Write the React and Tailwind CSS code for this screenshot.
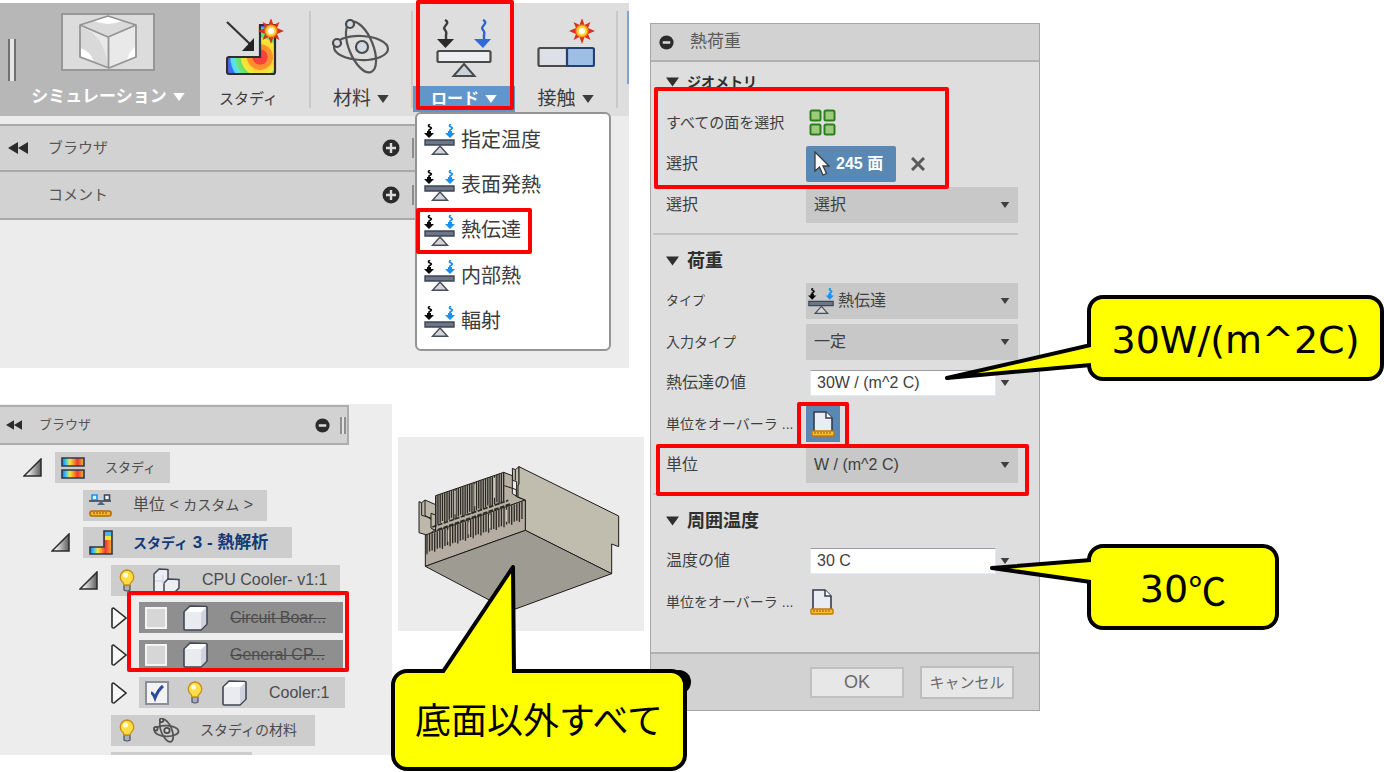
import clsx from "clsx";

const TriangleDown = ({ className }) => (
  <svg viewBox="0 0 10 7" className={className} aria-hidden="true">
    <path d="M0 0h10L5 7z" fill="currentColor" />
  </svg>
);

const Rewind = ({ className }) => (
  <svg viewBox="0 0 20 12" className={className} aria-hidden="true">
    <path d="M10 0v12L0 6zM20 0v12l-10-6z" fill="#2b2b2b" />
  </svg>
);

const RoundSign = ({ plus, className }) => (
  <svg viewBox="0 0 18 18" className={className} aria-hidden="true">
    <circle cx="9" cy="9" r="8.5" fill="#2b2b2b" />
    <path
      d={plus ? "M4 9h10M9 4v10" : "M4.5 9h9"}
      stroke="#dcdcdc"
      strokeWidth={plus ? 2.4 : 3}
    />
  </svg>
);

const Spark = ({ x, y }) => (
  <g transform={`translate(${x} ${y})`}>
    <path
      d="M0-13 2.5-6 8.5-9 6-3 13 0 6 3 8.5 9 2.5 6 0 13-2.5 6-8.5 9-6 3-13 0-6-3-8.5-9-2.5-6z"
      fill="#d8321a"
    />
    <circle r="6.5" fill="#f7941d" />
    <circle r="5" fill="#ffd83a" />
    <circle r="3" fill="#fff" />
  </g>
);

const CubeBig = () => (
  <svg viewBox="0 0 58 54" className="h-[54px] w-[58px]" aria-hidden="true">
    <path d="M1 10 29 1l28 9v32L30 53 1 42z" fill="#e9e9e9" />
    <path d="M1 10 29 1l28 9-28 12z" fill="#dadada" />
    <path d="M15 6 29 1l14 5q-14 6-28 0z" fill="#fff" />
    <path d="M1 12q24 6 28 40L1 42z" fill="#d9d9d9" />
    <path d="M1 33q10 3 14 13L1 41zM57 31q-8 6-9 15l9-4z" fill="#fff" />
    <path
      d="M1 10 29 1l28 9v32L30 53 1 42zM1 10l28 12 28-12M29.500 22v30"
      fill="none"
      stroke="#949494"
      strokeWidth="1.800"
      strokeLinejoin="round"
    />
  </svg>
);

const StudyIcon = () => (
  <svg viewBox="0 0 58 58" className="h-[58px] w-[58px]" aria-hidden="true">
    <defs>
      <radialGradient id="heat" gradientUnits="userSpaceOnUse" cx="34" cy="38" r="33">
        <stop offset="0.220" stopColor="#f8423c" />
        <stop offset="0.240" stopColor="#f98a2e" />
        <stop offset="0.380" stopColor="#f9962c" />
        <stop offset="0.400" stopColor="#fdd835" />
        <stop offset="0.560" stopColor="#f4ea3c" />
        <stop offset="0.600" stopColor="#6de05c" />
        <stop offset="0.740" stopColor="#6fe580" />
        <stop offset="0.780" stopColor="#5be4ee" />
        <stop offset="0.880" stopColor="#57d6f5" />
        <stop offset="0.920" stopColor="#3f6df0" />
      </radialGradient>
    </defs>
    <path
      d="M2 38h32V6h15v47q0 2-2 2H3q-2 0-2-2V40q0-2 2-2z"
      fill="url(#heat)"
      stroke="#2e2e2e"
      strokeWidth="2.200"
    />
    <path d="m1 3 23 22" stroke="#333" strokeWidth="2.200" />
    <path d="M28 19v13H16z" fill="#222" />
    <Spark x={45} y={12} />
  </svg>
);

const AtomIcon = ({ className, strokeWidth = 2.2 }) => (
  <svg viewBox="0 0 58 56" className={className} strokeWidth={strokeWidth} aria-hidden="true">
    <g fill="none" stroke="#555">
      <ellipse cx="29" cy="29" rx="27" ry="12" transform="rotate(2 29 29)" />
      <ellipse cx="29" cy="28" rx="12" ry="27" transform="rotate(-22 29 28)" />
    </g>
    <g fill="#d3dae4" stroke="#4b4b4b">
      <circle cx="30" cy="28" r="6" />
      <circle cx="18" cy="5" r="4" />
      <circle cx="5" cy="24" r="4" />
    </g>
  </svg>
);

const LoadIcon = () => (
  <svg viewBox="0 0 56 58" className="h-[58px] w-[56px]" aria-hidden="true">
    <g fill="none" strokeWidth="2.400">
      <path d="M9 1q4 2 1 5t-1 5 1 5v6" stroke="#3a3a3a" />
      <path d="M47 1q4 2 1 5t-1 5 1 5v6" stroke="#2f63c8" />
    </g>
    <path d="M1 20h17l-8.500 9z" fill="#2a2a2a" />
    <path d="M38 20h17l-8 9z" fill="#2f6ad8" />
    <rect x="1.500" y="32" width="53" height="11" rx="1.500" fill="#eceef2" stroke="#4a4a4a" strokeWidth="2.200" />
    <path d="m28 45 10.500 12h-21z" fill="#ccd2dc" stroke="#4a4a4a" strokeWidth="2" />
  </svg>
);

const ContactIcon = () => (
  <svg viewBox="0 0 58 50" className="h-[50px] w-[58px]" aria-hidden="true">
    <rect x="1.500" y="29" width="30" height="18" rx="1.500" fill="#dde0e6" stroke="#4a4a4a" strokeWidth="2.200" />
    <rect x="30" y="29" width="27" height="18" rx="1.500" fill="#9dbfe6" stroke="#253f74" strokeWidth="2.200" />
    <Spark x={45} y={12} />
  </svg>
);

const BalanceIcon = ({ className }) => (
  <svg viewBox="0 0 31 31" className={className} aria-hidden="true">
    <g fill="none" strokeWidth="1.800">
      <path d="M6 0q-3 2 0 3t-1 3v3" stroke="#111" />
      <path d="M27 0q-3 2 0 3t-1 3v3" stroke="#1791f5" />
    </g>
    <path d="M0 9h3V7h4v2h3l-5 5z" fill="#080808" />
    <path d="M21 9h3V7h4v2h3l-5 5z" fill="#1791f5" />
    <path d="M1 16h29v5H1z" fill="#6d7686" stroke="#3d4454" strokeWidth="1.400" />
    <path d="m16 22 7.500 8.300H8.500z" fill="#d4d6da" stroke="#454b59" strokeWidth="1.400" />
  </svg>
);

const HeatDefs = () => (
  <linearGradient id="rainbow">
    <stop offset="0" stopColor="#2c6cf0" />
    <stop offset="0.180" stopColor="#35cdf0" />
    <stop offset="0.350" stopColor="#f6e83a" />
    <stop offset="0.550" stopColor="#f98b2b" />
    <stop offset="0.700" stopColor="#f4392e" />
    <stop offset="1" stopColor="#f9b330" />
  </linearGradient>
);

const BarsIcon = () => (
  <svg viewBox="0 0 24 24" className="size-6" aria-hidden="true">
    <HeatDefs />
    <g fill="url(#rainbow)" stroke="#2f3747" strokeWidth="1.600">
      <path d="M1 2h22v8H1zM1 14h22v8H1z" />
    </g>
  </svg>
);

const UnitsIcon = () => (
  <svg viewBox="0 0 24 24" className="size-6" aria-hidden="true">
    <path d="M3 2h5v5H3z" fill="#e3f1fc" stroke="#1791f5" strokeWidth="1.600" />
    <path d="M15.500 2h5v5h-5z" fill="#f2f2f2" stroke="#3d4656" strokeWidth="1.600" />
    <path d="M0 8h22" stroke="#3d4656" strokeWidth="1.600" />
    <path d="m12 8 4 4H8z" fill="#59616f" />
    <rect x="1" y="18" width="21" height="5" rx="2" fill="#f6b52c" stroke="#b66a08" strokeWidth="1.600" />
    <path d="M5 19v2M8 19v2M11 19v2M14 19v2M17 19v2" stroke="#8a5207" />
  </svg>
);

const StudySmallIcon = () => (
  <svg viewBox="0 0 24 25" className="h-[25px] w-6" aria-hidden="true">
    <path d="M1 17h14V1h8v23H1z" fill="url(#rainbow)" stroke="#2f3747" strokeWidth="1.600" />
    <path d="M16 2h6v5h-6z" fill="#4bb7ef" />
    <path d="M16 6h6v4h-6z" fill="#f0e53c" />
  </svg>
);

const Bulb = () => (
  <svg viewBox="0 0 16 23" className="h-[23px] w-4" aria-hidden="true">
    <path d="M5 16h6v5q-3 2-6 0z" fill="#a9afb9" stroke="#4c525d" strokeWidth="1.200" />
    <path d="M8 1a7 7 0 0 1 4.500 12q-1.500 1-1.500 3H5q0-2-1.500-3A7 7 0 0 1 8 1z" fill="#ffdf45" stroke="#c78d15" strokeWidth="1.300" />
    <circle cx="6.500" cy="6" r="2.600" fill="#fffbd6" />
  </svg>
);

const Body = () => (
  <svg viewBox="0 0 25 26" className="h-[26px] w-[25px]" aria-hidden="true">
    <path d="m7 1 16 .5q1 0 1 1V19l-6 6H2q-1 0-1-1V7z" fill="#e9ebf1" stroke="#3f4654" strokeWidth="1.600" strokeLinejoin="round" />
    <path d="M7.500 2H23l-5 5H2z" fill="#fff" />
    <path d="M18 8v16l5-5V3z" fill="#cfd3de" />
  </svg>
);

const Assembly = () => (
  <svg viewBox="0 0 27 25" className="h-[25px] w-[27px]" aria-hidden="true">
    <g fill="#eceef3" stroke="#3f4654" strokeWidth="1.500" strokeLinejoin="round">
      <path d="m6 1 9 .5v12L11 24H1V6z" />
      <path d="m15 11 11 .5V20l-4 4H11v-9z" />
    </g>
    <path d="M2 13h8M10 7v9" stroke="#c9cdd6" />
  </svg>
);

const PageIcon = () => (
  <svg viewBox="0 0 24 26" className="h-[26px] w-6" aria-hidden="true">
    <path d="M3 1h12l6 6v15H3z" fill="#e9ecf2" stroke="#343b4b" strokeWidth="1.600" />
    <path d="M15 1v6h6" fill="#fff" stroke="#343b4b" strokeWidth="1.500" />
    <rect x="1" y="20" width="22" height="5" rx="1" fill="#fbbf2d" stroke="#c07a0c" strokeWidth="1.400" />
    <path d="M4 21v2M7 21v2M10 21v2M13 21v2M16 21v2M19 21v2" stroke="#8d5b0b" />
  </svg>
);

const FacesIcon = () => (
  <svg viewBox="0 0 27 27" className="size-[27px]" aria-hidden="true">
    <g fill="#9ccb7c" stroke="#2c7f1c" strokeWidth="2">
      <rect x="1.500" y="1.500" width="10" height="10" rx="1.500" />
      <rect x="15.500" y="1.500" width="10" height="10" rx="1.500" />
      <rect x="1.500" y="15.500" width="10" height="10" rx="1.500" />
      <rect x="15.500" y="15.500" width="10" height="10" rx="1.500" />
    </g>
  </svg>
);

const CursorIcon = () => (
  <svg viewBox="0 0 16 25" className="h-[25px] w-4" aria-hidden="true">
    <path d="M1 1v19l4.500-4 3.500 8 3.500-1.500L9 15h6z" fill="#fff" stroke="#3b3b3b" strokeWidth="1.300" />
  </svg>
);

const Expander = ({ open }) =>
  open ? (
    <svg viewBox="0 0 19 19" className="size-[19px]" aria-hidden="true">
      <linearGradient id="expander">
        <stop offset="0.200" stopColor="#f4f4f4" />
        <stop offset="1" stopColor="#5c5c5c" />
      </linearGradient>
      <path d="M18 1v17H1z" fill="url(#expander)" stroke="#2b2b2b" strokeWidth="1.500" />
    </svg>
  ) : (
    <svg viewBox="0 0 16 22" className="ml-1 h-[22px] w-4" aria-hidden="true">
      <path d="M1 2q0-1 1.500-1L15 11 3 21q-2 0-2-1z" fill="#f8f8f8" stroke="#2b2b2b" strokeWidth="1.600" />
    </svg>
  );

// Fins of the cooler, drawn as evenly spaced vertical strokes
const backFins = Array.from({ length: 31 }, (_, i) => i);
const frontFins = Array.from({ length: 38 }, (_, i) => i);

const Cooler = () => (
  <svg viewBox="9 6 738 582" className="h-[194px] w-full" role="img" aria-label="CPU Cooler">
    <g stroke="#1d1c19" strokeWidth="3" strokeLinejoin="round">
      <path d="M72 200l8 3 10-8 32 14v74l-24 18-26-8z" fill="#bdb8aa" />
      <path d="M80 203v38l28 8M90 195v46l18 12M108 235v44l14 8M108 235l14 5" fill="none" />
      <path d="M122 182 326 112l26 10v54l20 12 19 7-269 100z" fill="#b7b1a3" />
      <path d="M328 152l36 12v22" fill="none" />
      <path d="M352 100l9 4 11-9 1 93-8-3v-45l-12-4z" fill="#c0bcae" />
      <path d="M361 104v32" />
      <path d="M372 95l299 148v92l-21-8v89L391 286v-91l-22-9v-36l3-2z" fill="#c0bcae" />
      <path d="M91 394v-94l300-105v91z" fill="#b5ada1" />
      <path d="M91 394l300-108 259 130-305 112z" fill="#9e9b92" />
    </g>
    <g stroke="#2b2925" strokeWidth="4">
      {backFins.map((i) => (
        <path key={i} d={`M${122 + i * 6.8} ${182 - i * 2.33}v${92 - (i % 4) * 3}`} />
      ))}
      {frontFins.map((i) => (
        <path key={i} d={`M${96 + i * 7.7} ${300 - i * 2.7}v${i % 3 === 0 ? 58 : 52}`} />
      ))}
    </g>
    <path d="M112 276 340 196M128 284 348 206" stroke="#2b2925" strokeWidth="5" strokeDasharray="14 4" />
    <path d="M180 168v70M240 148v66M298 128v60M160 284v36M222 262v36M284 240v40M334 224v36" stroke="#cfc9bb" strokeWidth="4" />
  </svg>
);

const Highlight = ({ className }) => (
  <span
    className={clsx(
      "pointer-events-none absolute z-10 rounded-xs border-4 border-[#ff0000]",
      className
    )}
  />
);

const ToolLabel = ({ children, arrow = true, className }) => (
  <span
    className={clsx(
      "mt-auto flex h-[26px] items-center justify-center gap-1.5 self-stretch whitespace-nowrap",
      className
    )}
  >
    {children}
    {arrow && <TriangleDown className="h-2 w-3" />}
  </span>
);

const menuItems = ["指定温度", "表面発熱", "熱伝達", "内部熱", "輻射"];

function Toolbar() {
  return (
    <div className="grid h-[113px] grid-cols-[200fr_111fr_102fr_102fr_103fr_11fr] bg-[#dedede] text-[#3c3c3c]">
      <button type="button" className="flex bg-[#b7b7b7] text-white">
        <span className="mt-9 ml-2 h-[42px] w-2 border-x-2 border-[#707070] bg-[#e6e6e6]" />
        <span className="flex h-full flex-1 flex-col items-center pt-2.5">
          <span className="flex h-[58px] w-[94px] items-center justify-center border-2 border-[#979797] bg-[#dcdcdc]">
            <CubeBig />
          </span>
          <ToolLabel className="mb-1.5 text-[17px] font-bold">シミュレーション</ToolLabel>
        </span>
      </button>
      <button type="button" className="my-2 flex flex-col items-center border-r-2 border-[#c9c9c9] pt-2">
        <StudyIcon />
        <ToolLabel arrow={false} className="-mb-1 pr-3 text-[15px]">
          スタディ
        </ToolLabel>
      </button>
      <button type="button" className="my-2 flex flex-col items-center border-r-2 border-[#c9c9c9] pt-2">
        <AtomIcon className="h-14 w-[58px]" />
        <ToolLabel className="-mb-1 text-[19px]">材料</ToolLabel>
      </button>
      <div className="relative">
        <button type="button" className="flex size-full flex-col items-center pt-4">
          <LoadIcon />
          <ToolLabel className="mb-1 bg-[#6096cc] text-base font-bold text-white">ロード</ToolLabel>
        </button>
        <Highlight className="-top-[3px] left-[3px] h-[110px] w-[98px]" />
        <ul className="absolute top-[109px] left-0.5 grid h-[239px] w-[196px] auto-rows-fr rounded-md border-2 border-[#949494] bg-white pt-[3px] pb-[5px]">
          {menuItems.map((item) => (
            <li key={item} className="relative flex">
              <button type="button" className="flex flex-1 items-center gap-1.5 pl-[7px] text-left text-xl leading-6">
                <BalanceIcon className="size-[31px]" />
                {item}
              </button>
              {item === "熱伝達" && (
                <Highlight className="top-0 -left-px h-[46px] w-[116px]" />
              )}
            </li>
          ))}
        </ul>
      </div>
      <button type="button" className="my-2 flex flex-col items-center border-r-2 border-[#c9c9c9] pt-2">
        <ContactIcon />
        <ToolLabel className="-mb-1 text-[19px]">接触</ToolLabel>
      </button>
      <span className="mt-2 h-[73px] w-0.5 justify-self-end bg-[#7fa3cc]" />
    </div>
  );
}

function PanelBar({ title, rewind }) {
  return (
    <div className="flex h-[46px] items-center pl-2">
      <span className="w-10">{rewind && <Rewind className="h-3 w-5" />}</span>
      <span className="text-[15px]">{title}</span>
      <button type="button" aria-label={title} className="ml-auto">
        <RoundSign plus className="size-[18px]" />
      </button>
      <span className="ml-3 h-5 w-2 border-l-2 border-[#8c8c8c]" />
    </div>
  );
}

const TreeRow = ({ indent, open, width, dark, children }) => (
  <li className={clsx("flex items-start", indent)}>
    <span className="flex h-[31px] w-8 shrink-0 items-center">
      {open !== undefined && <Expander open={open} />}
    </span>
    <span
      className={clsx(
        "flex h-[31px] items-center whitespace-nowrap",
        width,
        dark ? "bg-[#8f8f8f]" : "bg-[#cdcdcd]"
      )}
    >
      {children}
    </span>
  </li>
);

const HiddenBody = ({ id, name }) => (
  <TreeRow indent="pl-[107px]" open={false} width="w-[204px] pl-1.5" dark>
    <input
      id={id}
      type="checkbox"
      className="size-[22px] appearance-none border-2 border-[#f4f4f4] bg-[#d6d6d6]"
    />
    <label htmlFor={id} className="ml-4 flex items-center gap-[22px] text-[#4c4c4c] line-through">
      <Body />
      {name}
    </label>
  </TreeRow>
);

function Browser() {
  return (
    <section className="h-[351px] w-[392px] shrink-0 overflow-hidden bg-[#ededed] pt-px text-[#4b4b4b]">
      <div className="flex h-10 w-[349px] items-center border-2 border-l-0 border-[#adadad] bg-[#d2d2d2] pl-1.5 text-[#555]">
        <span className="w-[33px]">
          <Rewind className="h-2.5 w-4" />
        </span>
        <span className="text-[13px]">ブラウザ</span>
        <button type="button" aria-label="ブラウザを閉じる" className="ml-auto">
          <RoundSign className="size-[15px]" />
        </button>
        <span className="mr-px ml-2.5 h-[17px] w-1.5 border-x-2 border-[#8f8f8f] bg-[#e2e2e2]" />
      </div>
      <ul className="relative mt-[7px] grid h-[300px] auto-rows-fr text-base leading-5">
        <TreeRow indent="pl-[23px]" open width="w-[115px] pl-1.5">
          <BarsIcon />
          <span className="ml-5 text-[13px]">スタディ</span>
        </TreeRow>
        <TreeRow indent="pl-[51px]" width="w-[184px] pl-1.5">
          <UnitsIcon />
          <span className="ml-5 text-base">
            単位 &lt; <span className="text-[14px]">カスタム</span> &gt;
          </span>
        </TreeRow>
        <TreeRow indent="pl-[51px]" open width="w-[209px] pl-1.5">
          <StudySmallIcon />
          <span className="ml-5 text-[17px] font-bold text-[#123a78]">
            <span className="text-[14px]">スタディ</span> 3 - 熱解析
          </span>
        </TreeRow>
        <TreeRow indent="pl-[79px]" open width="w-[229px] pl-2">
          <Bulb />
          <span className="ml-[18px] flex items-center gap-[22px]">
            <Assembly />
            CPU Cooler- v1:1
          </span>
        </TreeRow>
        <HiddenBody id="circuit" name="Circuit Boar..." />
        <HiddenBody id="general" name="General CP..." />
        <TreeRow indent="pl-[107px]" open={false} width="w-[206px] pl-1.5">
          <span className="relative flex">
            <input
              id="cooler"
              type="checkbox"
              defaultChecked
              className="peer size-6 appearance-none border-2 border-[#8a8f99] bg-[#f3f3f3]"
            />
            <svg
              viewBox="0 0 24 24"
              className="pointer-events-none invisible absolute inset-0 peer-checked:visible"
              aria-hidden="true"
            >
              <path d="M6 12q2 0 4 5Q13 9 18 5" fill="none" stroke="#2c4a9e" strokeWidth="3" />
            </svg>
          </span>
          <label htmlFor="cooler" className="ml-[18px] flex items-center">
            <Bulb />
            <span className="ml-[19px] flex items-center gap-[22px]">
              <Body />
              Cooler:1
            </span>
          </label>
        </TreeRow>
        <TreeRow indent="pl-[79px]" width="w-[204px] pl-2">
          <Bulb />
          <span className="ml-[18px] flex items-center gap-5 text-[14px]">
            <AtomIcon className="h-[25px] w-[27px]" strokeWidth={4} />
            スタディの材料
          </span>
        </TreeRow>
        <Highlight className="top-[139px] left-[127px] h-[81px] w-[222px]" />
      </ul>
      <div className="ml-[111px] h-[3px] w-[141px] bg-[#cdcdcd]" />
    </section>
  );
}

const Field = ({ label, htmlFor, size = "text-base", children }) => (
  <div className="flex h-[41px] items-center pr-[21px] pl-[15px]">
    <label htmlFor={htmlFor} className={clsx("w-[140px] shrink-0 whitespace-nowrap", size)}>
      {label}
    </label>
    {children}
  </div>
);

const Select = ({ id, value, icon }) => (
  <span className="flex h-9 min-w-0 flex-1 items-center bg-[#c8c8c8] pr-2">
    {icon}
    <select
      id={id}
      defaultValue={value}
      className={clsx("h-full min-w-0 flex-1 appearance-none text-base", icon ? "pl-1" : "pl-2")}
    >
      <option>{value}</option>
    </select>
    <TriangleDown className="h-1.5 w-2.5" />
  </span>
);

const ValueInput = ({ id, value }) => (
  <span className="flex min-w-0 flex-1 items-center pr-2 pl-1">
    <input
      id={id}
      defaultValue={value}
      className="h-[26px] min-w-0 flex-1 border border-t-[#9c9ca4] border-r-[#e2e8f4] border-b-[#e2e8f4] border-l-[#e2e8f4] bg-white px-1.5 text-base"
    />
    <TriangleDown className="ml-1 h-1.5 w-2.5 shrink-0" />
  </span>
);

const GroupHeading = ({ children, className }) => (
  <h3 className={clsx("flex items-center gap-2 pl-[15px] font-bold text-[#2f2f2f]", className)}>
    <TriangleDown className="h-2.5 w-[13px]" />
    {children}
  </h3>
);

function ThermalLoadDialog() {
  return (
    <section className="mt-[23px] ml-1.5 self-start border border-[#a6a6a6] bg-[#dedede] text-[#3f3f3f]">
      <header className="flex h-[38px] items-center border-b-2 border-[#b1b1b1] bg-[#d2d2d2] pl-2">
        <RoundSign className="size-[15px]" />
        <h2 className="ml-4 text-[17px] text-[#5a5a5a]">熱荷重</h2>
      </header>

      <GroupHeading className="h-10 text-[14px]">ジオメトリ</GroupHeading>
      <div className="relative">
        <Highlight className="-top-[15px] left-[3px] h-[102px] w-[295px]" />
        <Field label="すべての面を選択" htmlFor="all-faces" size="text-[15px]">
          <button id="all-faces" type="button" className="ml-[3px]">
            <FacesIcon />
          </button>
        </Field>
        <Field label="選択" htmlFor="faces">
          <button
            id="faces"
            type="button"
            className="flex h-9 w-[90px] items-center gap-1.5 rounded-xs bg-[#5888b3] pl-2 text-base font-bold text-white"
          >
            <CursorIcon />
            <span className="whitespace-nowrap">245 面</span>
          </button>
          <button type="button" aria-label="選択解除" className="ml-[15px]">
            <svg viewBox="0 0 14 14" className="size-3.5" aria-hidden="true">
              <path d="m1 1 12 12M13 1 1 13" stroke="#5a5a5a" strokeWidth="3" />
            </svg>
          </button>
        </Field>
        <Field label="選択" htmlFor="selection">
          <Select id="selection" value="選択" />
        </Field>
      </div>

      <hr className="mt-2 mr-[21px] ml-0.5 border-t-2 border-[#c3c3c3]" />
      <GroupHeading className="h-[45px] pt-1.5 text-lg">荷重</GroupHeading>
      <Field label="タイプ" htmlFor="load-type" size="text-[13px]">
        <Select id="load-type" value="熱伝達" icon={<BalanceIcon className="ml-0.5 size-[26px]" />} />
      </Field>
      <Field label="入力タイプ" htmlFor="input-type" size="text-[14px]">
        <Select id="input-type" value="一定" />
      </Field>
      <Field label="熱伝達の値" htmlFor="transfer">
        <ValueInput id="transfer" value="30W / (m^2 C)" />
      </Field>
      <div className="relative">
        <Field label="単位をオーバーラ ..." htmlFor="override-load" size="text-[14px]">
          <button
            id="override-load"
            type="button"
            className="flex h-9 w-[34px] items-center justify-center bg-[#5888b3]"
          >
            <PageIcon />
          </button>
        </Field>
        <Highlight className="-top-px left-[146px] h-[46px] w-[52px]" />
      </div>
      <div className="relative">
        <Field label="単位" htmlFor="unit">
          <Select id="unit" value="W / (m^2 C)" />
        </Field>
        <Highlight className="top-0 right-2.5 left-[5px] h-[52px]" />
      </div>

      <hr className="mt-2 mr-[21px] ml-0.5 border-t-2 border-[#c3c3c3]" />
      <GroupHeading className="h-[45px] pt-1.5 text-lg">周囲温度</GroupHeading>
      <Field label="温度の値" htmlFor="ambient">
        <ValueInput id="ambient" value="30 C" />
      </Field>
      <Field label="単位をオーバーラ ..." htmlFor="override-ambient" size="text-[14px]">
        <button id="override-ambient" type="button" className="ml-1">
          <PageIcon />
        </button>
      </Field>

      <footer className="mt-[30px] flex h-[58px] items-center gap-4 border-t-2 border-[#b1b1b1] bg-[#d2d2d2] pr-[25px] text-[#6a6a6a]">
        <button type="button" aria-label="ヘルプ" className="mr-auto ml-4 size-6 rounded-full bg-black" />
        <button type="button" className="h-[31px] w-[94px] border-2 border-[#c0c0c0] bg-[#e7e7e7] text-lg leading-none">
          OK
        </button>
        <button type="button" className="h-[33px] w-[94px] border-2 border-[#bdbdbd] bg-[#e7e7e7] text-[15px] leading-none">
          キャンセル
        </button>
      </footer>
    </section>
  );
}

const Callout = ({ children, className, tail }) => (
  <div
    className={clsx(
      "flex items-center justify-center rounded-2xl border-4 border-black bg-[#ffff00] pt-1 whitespace-nowrap text-black",
      className
    )}
  >
    {tail}
    {children}
  </div>
);

const tailProps = {
  fill: "#ffff00",
  stroke: "#000",
  strokeWidth: 4,
  strokeLinejoin: "round",
};

export default function App() {
  return (
    <main className="grid min-h-screen grid-cols-[minmax(0,644fr)_minmax(0,396fr)_minmax(0,344fr)] bg-white font-['Liberation_Sans','Noto_Sans_CJK_JP',sans-serif] leading-5">
      <div className="pt-[3px]">
        <section className="mr-[15px] bg-[#ececec] pb-[148px]">
          <Toolbar />
          <div className="mt-2 w-[420px] divide-y-2 divide-[#a9a9a9] border-y-2 border-[#a9a9a9] bg-[#d2d2d2] text-[#555]">
            <PanelBar title="ブラウザ" rewind />
            <PanelBar title="コメント" />
          </div>
        </section>

        <div className="mt-9 flex items-start gap-1.5">
          <Browser />
          <figure className="relative mt-[33px] flex-1 bg-[#ececec]">
            <Cooler />
            <Callout
              className="absolute top-[232px] -left-[7px] z-20 h-[102px] w-[296px] text-4xl leading-none"
              tail={
                <svg
                  viewBox="0 0 84 112"
                  className="absolute -top-[112px] left-[42px] h-[112px] w-[84px]"
                  aria-hidden="true"
                >
                  <path d="M5 112 76 6l1 106" {...tailProps} />
                </svg>
              }
            >
              底面以外すべて
            </Callout>
          </figure>
        </div>
      </div>

      <ThermalLoadDialog />

      <div className="flex flex-col items-start gap-[163px] pt-[295px] pl-[47px] font-['DejaVu_Sans','Noto_Sans_CJK_JP',sans-serif] text-[38px] leading-none">
        <Callout
          className="relative z-20 h-[86px] w-full"
          tail={
            <svg
              viewBox="0 0 148 44"
              className="absolute top-10 -left-[148px] h-[44px] w-[148px]"
              aria-hidden="true"
            >
              <path d="M148 6 4 39l144-13" {...tailProps} />
            </svg>
          }
        >
          30W/(m^2C)
        </Callout>
        <Callout
          className="relative z-20 h-[86px] w-[192px]"
          tail={
            <svg
              viewBox="0 0 104 40"
              className="absolute top-1 -left-[104px] h-10 w-[104px]"
              aria-hidden="true"
            >
              <path d="M104 8 5 16l99 14" {...tailProps} />
            </svg>
          }
        >
          30<span className="font-['Noto_Sans_CJK_JP',sans-serif]">℃</span>
        </Callout>
      </div>
    </main>
  );
}
